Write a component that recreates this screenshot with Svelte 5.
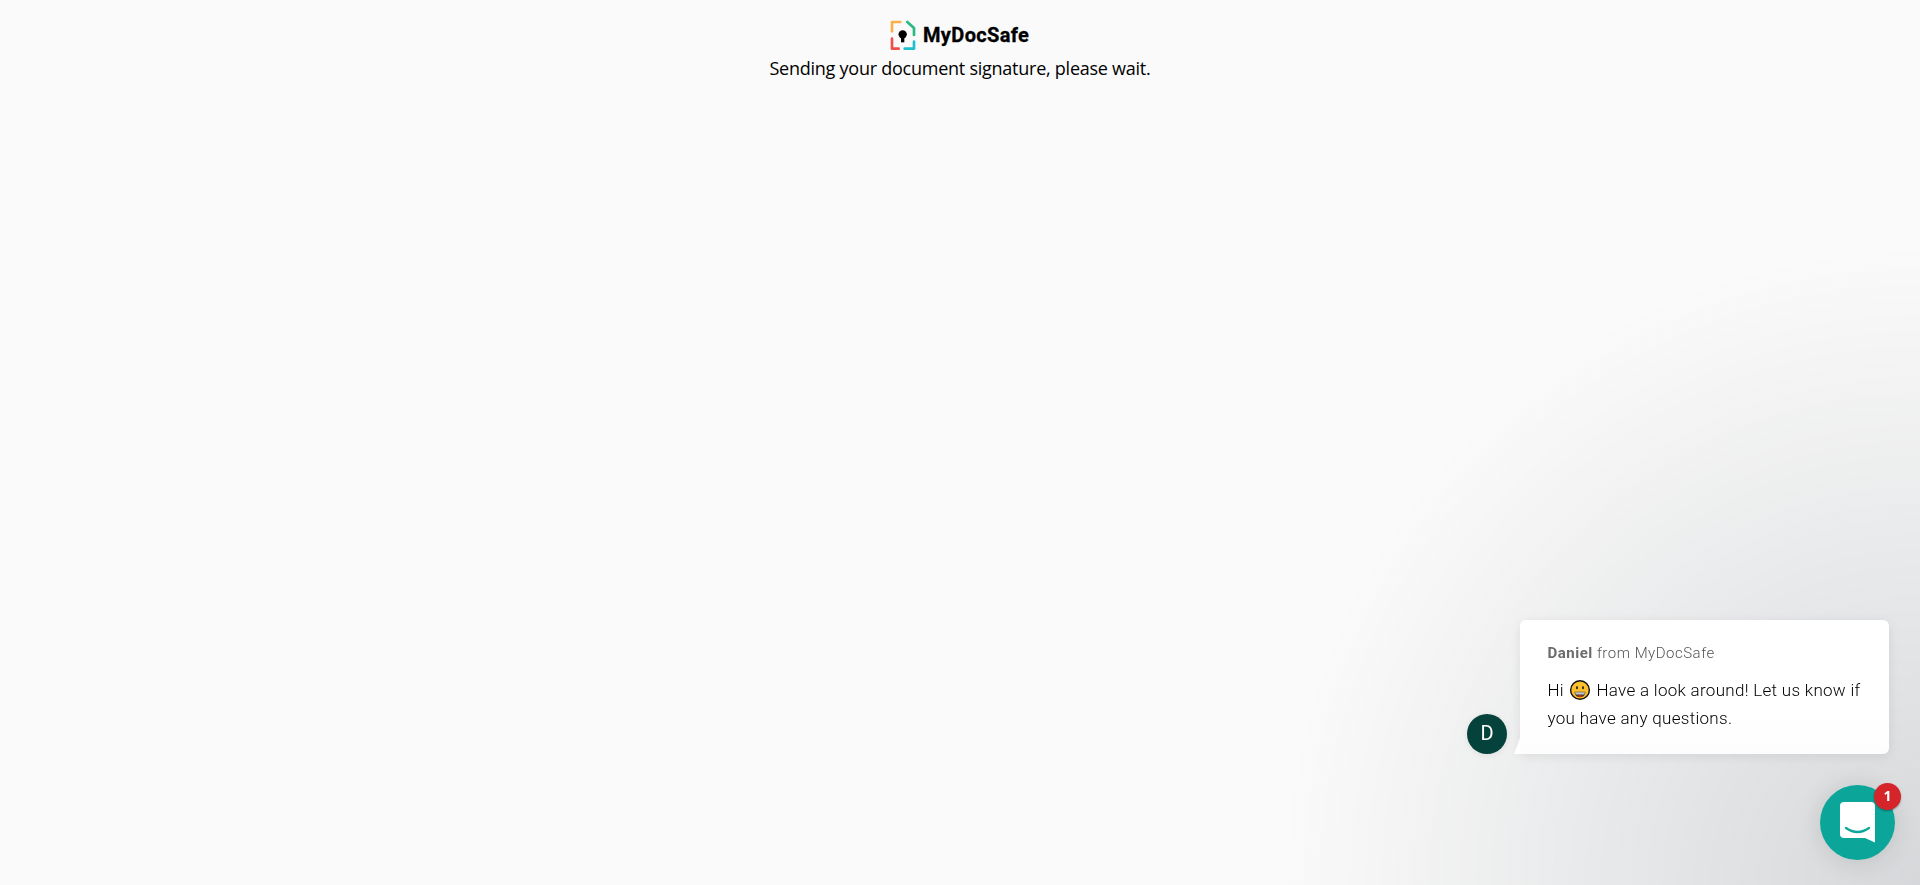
<script>
  const sender = { name: 'Daniel', company: 'MyDocSafe' };
  const unread = 1;
</script>

<main class="page">
  <header class="brand">
    <svg class="mark" width="26" height="31" viewBox="0 0 78 93" fill="none" stroke-width="8" stroke-linecap="round" stroke-linejoin="round">
      <path d="M31 6H6v28" stroke="#fbb04c" />
      <path d="M52 6l20 18v21" stroke="#29ba81" />
      <path d="M6 56v30h20" stroke="#f0504b" />
      <path d="M72 65v21H44" stroke="#1fc0ce" />
      <circle cx="38" cy="43" r="12.500" fill="#000" />
      <path d="M33 50h10v17h-10z" fill="#000" />
    </svg>
    <span class="name">MyDocSafe</span>
  </header>
  <p class="status">Sending your document signature, please wait.</p>
</main>

<aside class="messenger">
  <div class="chat">
    <div class="avatar">D</div>
    <div class="card">
      <svg class="tail" width="6" height="16" viewBox="0 0 6 16"><path d="M6 0v16H0z" fill="#fff" /></svg>
      <div class="from"><b>{sender.name}</b> from {sender.company}</div>
      <div class="body">
        <div class="line">
          <span class="hi">Hi</span>
          <svg class="emoji" width="20" height="20" viewBox="0 0 20 20">
            <circle cx="10" cy="10" r="9.300" fill="#ffc02e" stroke="#111" stroke-width="1.400" />
            <ellipse cx="7" cy="7.700" rx="0.900" ry="1.600" fill="#1b1b1b" />
            <ellipse cx="13" cy="7.700" rx="0.900" ry="1.600" fill="#1b1b1b" />
            <path d="M4.500 11.800h11c0 3.300-2.300 5.500-5.500 5.500s-5.500-2.200-5.500-5.500z" fill="#4a3a28" />
            <path d="M5 12.200h10l-.7 2.200H5.700z" fill="#c0c5c8" />
            <path d="M7.500 16.200q2.500-1.800 5 0q-2.500 1.300-5 0z" fill="#e8321c" />
          </svg>
          <span class="look">Have a look around! Let us know if</span>
        </div>
        <div class="line"><span class="ask">you have any questions.</span></div>
      </div>
    </div>
  </div>
  <div class="launcher">
    <svg width="35" height="41" viewBox="0 0 35 41">
      <path d="M4 0h27a4 4 0 0 1 4 4v36.500L25 36H4a4 4 0 0 1-4-4V4a4 4 0 0 1 4-4z" fill="#fff" />
      <path d="M6 26q11.500 8 23 0" fill="none" stroke="#0ba699" stroke-width="2.300" stroke-linecap="round" />
    </svg>
    <span class="badge">{unread}</span>
  </div>
</aside>

<style>
  :global(body) {
    margin: 0;
    background: #fafafa;
    overflow: hidden;
  }
  .page {
    display: flex;
    flex-direction: column;
    align-items: center;
    padding-top: 20px;
  }
  .brand {
    display: flex;
    align-items: center;
    height: 31px;
    width: 141px;
    gap: 7.500px;
  }
  .mark { flex: none; }
  .name {
    font: 700 20px/31px Roboto, sans-serif;
    letter-spacing: 0.360px;
    -webkit-text-stroke: 0.300px #000;
    color: #000;
    white-space: nowrap;
  }
  .status {
    margin: 3px 0 0;
    font: 400 18px/28px "Open Sans", sans-serif;
    letter-spacing: -0.250px;
    color: #000;
    white-space: nowrap;
  }
  .messenger {
    position: fixed;
    right: 0;
    bottom: 0;
    width: 700px;
    height: 700px;
    box-sizing: border-box;
    padding: 0 25px 25px 0;
    display: flex;
    flex-direction: column;
    justify-content: flex-end;
    align-items: flex-end;
    background: radial-gradient(circle at bottom right, rgba(29, 39, 54, 0.16) 0, rgba(29, 39, 54, 0) 640px);
    font-family: Roboto, sans-serif;
  }
  .chat {
    display: flex;
    align-items: flex-end;
    gap: 13px;
    margin: 0 6px 31px 0;
  }
  .avatar {
    width: 40px;
    height: 40px;
    border-radius: 50%;
    background: #04423b;
    color: #fff;
    font: 400 20px/39px Roboto, sans-serif;
    text-align: center;
    box-shadow: 0 1px 6px rgba(0, 0, 0, 0.08);
  }
  .card {
    position: relative;
    width: 369px;
    height: 134px;
    box-sizing: border-box;
    padding: 22px 0 0 27.500px;
    background: linear-gradient(#fff 65%, #fdfdfd);
    border-radius: 6px 6px 6px 0;
    box-shadow: 0 2px 12px rgba(0, 0, 0, 0.08);
  }
  .tail {
    position: absolute;
    left: -6px;
    bottom: 0;
  }
  .from {
    font-size: 15px;
    font-weight: 300;
    line-height: 22px;
    letter-spacing: 0.500px;
    color: #555;
    white-space: nowrap;
  }
  .from b { font-weight: 700; color: #6b6b6b; }
  .body {
    margin-top: 12px;
    font-size: 17px;
    font-weight: 300;
    line-height: 28px;
    letter-spacing: 0.290px;
    color: #000;
  }
  .line {
    display: flex;
    align-items: center;
    height: 28px;
    white-space: nowrap;
  }
  .hi { width: 22.500px; }
  .emoji { margin-right: 6.500px; }
  .launcher {
    position: relative;
    width: 75px;
    height: 75px;
    border-radius: 50%;
    background: #0ba699;
    display: flex;
    align-items: center;
    justify-content: center;
    box-shadow: 0 2px 24px rgba(0, 0, 0, 0.13);
  }
  .badge {
    position: absolute;
    right: -6px;
    top: -2px;
    width: 27px;
    height: 27px;
    border-radius: 50%;
    background: #d6252a;
    color: #fff;
    font: 700 14px/26px "Open Sans", sans-serif;
    text-align: center;
    box-shadow: 0 1px 2px rgba(0, 0, 0, 0.35);
  }
</style>
